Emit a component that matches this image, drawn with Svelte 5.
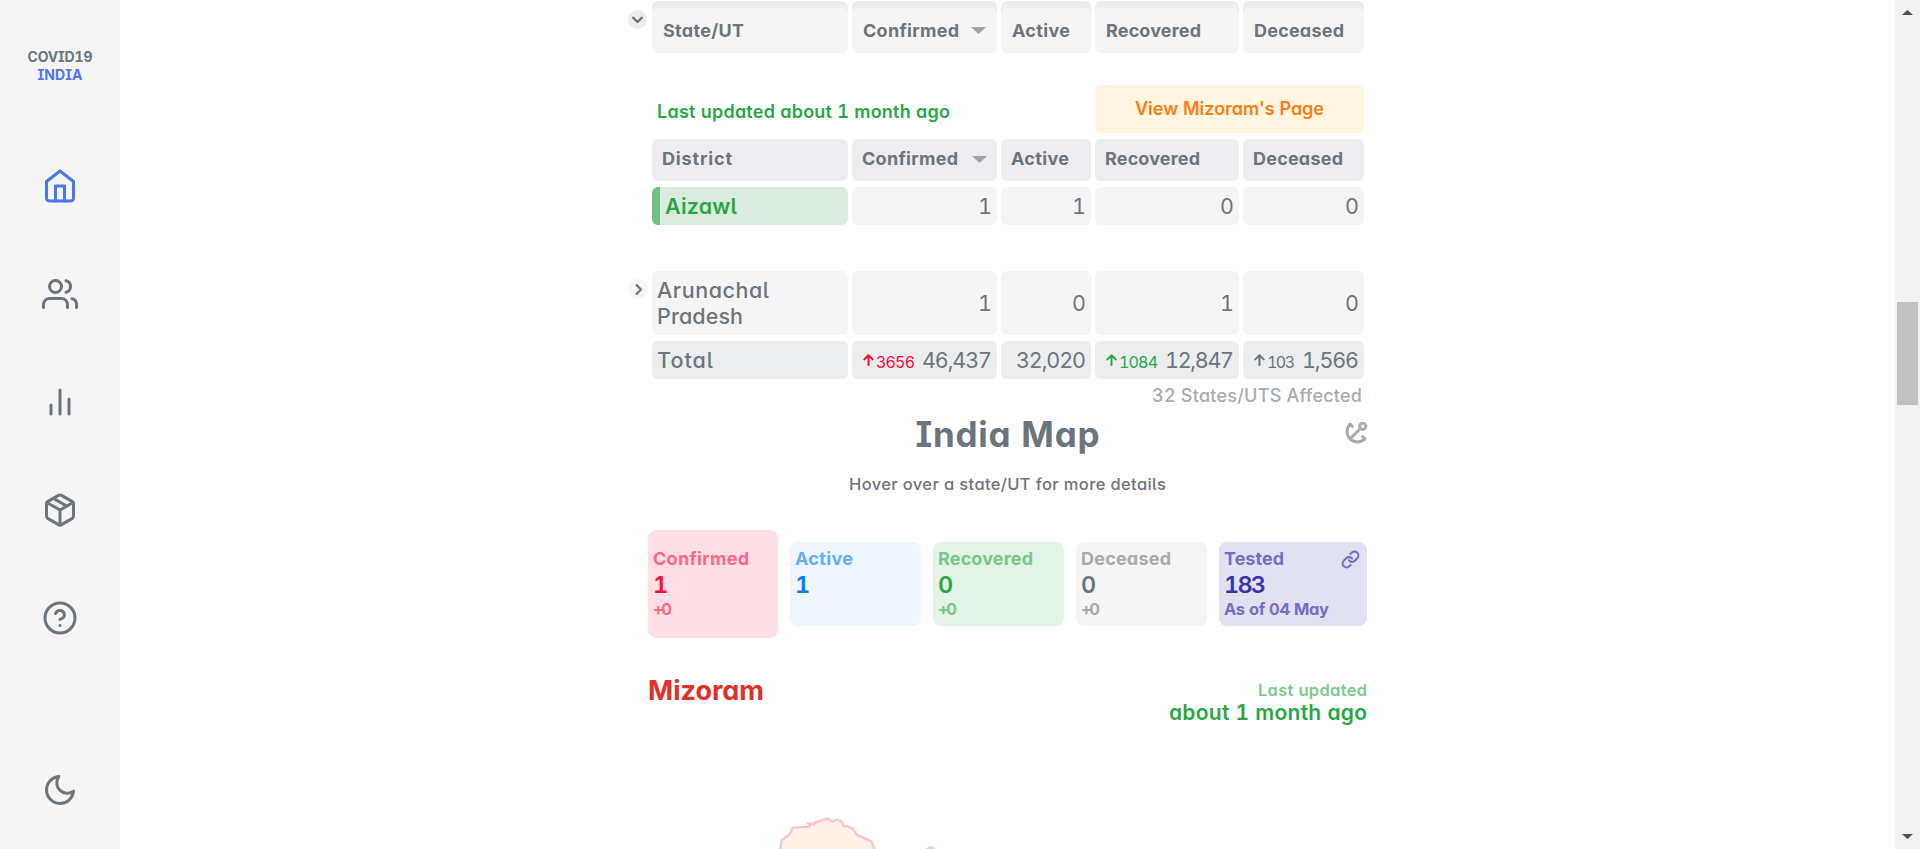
<script>
  const headings = [
    { label: 'Confirmed', width: 96, sorted: true },
    { label: 'Active', width: 58 },
    { label: 'Recovered', width: 95 },
    { label: 'Deceased', width: 90 },
  ];

  const totals = [
    { value: '46,437', width: 70, delta: '3656', deltaWidth: 39, tone: 'red' },
    { value: '32,020', width: 70 },
    { value: '12,847', width: 69, delta: '1084', deltaWidth: 39, tone: 'green' },
    { value: '1,566', width: 57, delta: '103', deltaWidth: 28, tone: 'gray' },
  ];

  const cards = [
    { kind: 'confirmed', label: 'Confirmed', width: 96, value: '1', delta: '+0' },
    { kind: 'active', label: 'Active', width: 58, value: '1', delta: '' },
    { kind: 'recovered', label: 'Recovered', width: 95, value: '0', delta: '+0' },
    { kind: 'deceased', label: 'Deceased', width: 90, value: '0', delta: '+0' },
  ];

  // Tracks a label so that it occupies the given width.
  function fit(node, width) {
    const count = node.textContent.length - 1;
    const spacing = (width - node.getBoundingClientRect().width) / count;
    node.style.letterSpacing = `${spacing}px`;
    node.style.marginRight = `${-spacing}px`;
  }
</script>

{#snippet headRow(first, firstWidth)}
  <div class="cell"><span class="t" use:fit={firstWidth}>{first}</span></div>
  {#each headings as h}
    <div class="cell">
      <span class="t" use:fit={h.width}>{h.label}</span>
      {#if h.sorted}<svg class="caret" width="15" height="7" viewBox="0 0 15 7"><path d="M0 0h15L7.5 7z" /></svg>{/if}
    </div>
  {/each}
{/snippet}

<div class="page">
  <nav>
    <div class="logo">
      <span class="t" use:fit={65}>COVID19</span>
      <span class="t blue" use:fit={45}>INDIA</span>
    </div>
    <svg class="nav-icon blue" viewBox="0 0 24 24"><path d="M3 9l9-7 9 7v11a2 2 0 0 1-2 2H5a2 2 0 0 1-2-2z" /><path d="M9 22V12h6v10" /></svg>
    <svg class="nav-icon" viewBox="0 0 24 24"><path d="M17 21v-2a4 4 0 0 0-4-4H5a4 4 0 0 0-4 4v2" /><circle cx="9" cy="7" r="4" /><path d="M23 21v-2a4 4 0 0 0-3-3.87M16 3.13a4 4 0 0 1 0 7.75" /></svg>
    <svg class="nav-icon" viewBox="0 0 24 24"><path d="M18 20V10M12 20V4M6 20v-6" /></svg>
    <svg class="nav-icon" viewBox="0 0 24 24"><path d="M16.5 9.4L7.5 4.21" /><path d="M21 16V8a2 2 0 0 0-1-1.73l-7-4a2 2 0 0 0-2 0l-7 4A2 2 0 0 0 3 8v8a2 2 0 0 0 1 1.73l7 4a2 2 0 0 0 2 0l7-4A2 2 0 0 0 21 16z" /><path d="M3.27 6.96L12 12.01l8.73-5.05M12 22.08V12" /></svg>
    <svg class="nav-icon" viewBox="0 0 24 24"><circle cx="12" cy="12" r="10" /><path d="M9.09 9a3 3 0 0 1 5.83 1c0 2-3 3-3 3M12 17h.01" /></svg>
    <svg class="nav-icon moon" viewBox="0 0 24 24"><path d="M21 12.79A9 9 0 1 1 11.21 3 7 7 0 0 0 21 12.79z" /></svg>
  </nav>

  <main>
    <section class="table">
      <div class="line">
        <span class="toggle open"><svg viewBox="0 0 24 24"><path d="M5 9l7 7 7-7" /></svg></span>
        <div class="row sticky">{@render headRow('State/UT', 81)}</div>
      </div>
      <div class="row info">
        <span class="updated"><span class="t" use:fit={293}>Last updated about 1 month ago</span></span>
        <div class="button"><span class="t" use:fit={189}>View Mizoram's Page</span></div>
      </div>
      <div class="row district">{@render headRow('District', 70)}</div>
      <div class="row values">
        <div class="cell zone"><span class="t" use:fit={72}>Aizawl</span></div>
        {#each ['1', '1', '0', '0'] as n}<div class="cell num">{n}</div>{/each}
      </div>
      <div class="line state">
        <span class="toggle"><svg viewBox="0 0 24 24"><path d="M9 5l7 7-7 7" /></svg></span>
        <div class="row values">
          <div class="cell name"><span class="t" use:fit={112}>Arunachal</span><span class="t" use:fit={86}>Pradesh</span></div>
          {#each ['1', '0', '1', '0'] as n}<div class="cell num">{n}</div>{/each}
        </div>
      </div>
      <div class="row values total">
        <div class="cell name"><span class="t" use:fit={56}>Total</span></div>
        {#each totals as c}
          <div class="cell num">
            {#if c.delta}
              <span class="delta {c.tone}">
                <svg width="11" height="12" viewBox="0 0 11 12"><path d="M5.5 11V1.5M1.3 5.4L5.5 1.3l4.2 4.1" /></svg>
                <span class="t" use:fit={c.deltaWidth}>{c.delta}</span>
              </span>
            {/if}
            <span class="t" use:fit={c.width}>{c.value}</span>
          </div>
        {/each}
      </div>
      <div class="affected"><span class="t" use:fit={210}>32 States/UTS Affected</span></div>
    </section>

    <section class="map">
      <header>
        <h1><span class="t" use:fit={184}>India Map</span></h1>
        <svg class="anchor" viewBox="0 0 24 24"><g transform="rotate(45 12 12)"><circle cx="12" cy="5" r="3" /><path d="M12 22V8M5 12H2a10 10 0 0 0 20 0h-3" /></g></svg>
      </header>
      <p class="hint"><span class="t" use:fit={317}>Hover over a state/UT for more details</span></p>

      <div class="cards">
        {#each cards as c}
          <div class="card {c.kind}">
            <span class="label"><span class="t" use:fit={c.width}>{c.label}</span></span>
            <span class="value">{c.value}</span>
            <span class="change">{#if c.delta}<span class="t" use:fit={19}>{c.delta}</span>{/if}</span>
          </div>
        {/each}
        <div class="card tested">
          <span class="label">
            <span class="t" use:fit={60}>Tested</span>
            <svg class="link" viewBox="0 0 24 24"><path d="M10 13a5 5 0 0 0 7.54.54l3-3a5 5 0 0 0-7.07-7.07l-1.72 1.71" /><path d="M14 11a5 5 0 0 0-7.54-.54l-3 3a5 5 0 0 0 7.07 7.07l1.71-1.71" /></svg>
          </span>
          <span class="value"><span class="t" use:fit={42}>183</span></span>
          <span class="change"><span class="t" use:fit={105}>As of 04 May</span></span>
        </div>
      </div>

      <div class="region">
        <h2><span class="t" use:fit={116}>Mizoram</span></h2>
        <div class="stamp">
          <span class="t soft" use:fit={109}>Last updated</span>
          <span class="t strong" use:fit={198}>about 1 month ago</span>
        </div>
      </div>

      <svg class="outline" width="200" height="59" viewBox="0 0 600 177">
        <path class="land" d="M60 190L64 152 90 132 98 113 148 110 151 105 142 100 162 104 166 97 203 85 216 95 232 89 247 96 251 109 262 108 278 116 290 134 335 155 352 200" />
        <path class="land east" d="M498 180L508 173H517L524 181" />
      </svg>
    </section>
  </main>

  <aside class="scrollbar">
    <svg width="11" height="5" viewBox="0 0 11 5"><path d="M0 5L5.5 0 11 5z" /></svg>
    <div class="thumb"></div>
    <svg class="down" width="11" height="5" viewBox="0 0 11 5"><path d="M0 0h11L5.5 5z" /></svg>
  </aside>
</div>

<style>
  :global(body) { background: #fff; overflow: hidden; }
  * { box-sizing: border-box; }
  svg { fill: none; stroke: currentColor; stroke-width: 2; stroke-linecap: round; stroke-linejoin: round; display: block; flex: none; }
  .page {
    display: flex; width: 1920px; height: 849px; overflow: hidden; color: #6c757d;
    font-family: Inter, "Open Sans", sans-serif;
    font-feature-settings: "cv05", "cv08", "cv11", "tnum";
  }
  .t { display: inline-block; white-space: nowrap; flex: none; }

  nav { width: 120px; background: #f5f5f5; display: flex; flex-direction: column; align-items: center; gap: 72px; padding-top: 48px; }
  .logo { display: flex; flex-direction: column; align-items: center; font-size: 14px; line-height: 18px; font-weight: 700; margin-bottom: 12px; height: 36px; }
  .blue { color: #4c75f2; }
  .nav-icon { width: 36px; height: 36px; }
  .moon { margin-top: 64px; }

  main { flex: 1; padding-left: 508px; }
  .table { width: 736px; padding: 1px 0 0 24px; }
  .line { display: flex; margin-left: -24px; }
  .toggle { width: 20px; height: 20px; border-radius: 50%; background: #f5f5f5; display: grid; place-items: center; margin-right: 4px; margin-top: 8px; }
  .toggle.open { width: 19px; height: 19px; margin: 9px 5px 0 0; background: #ebedef; }
  .toggle svg { width: 15px; height: 15px; stroke-width: 3.4; }
  .row { display: grid; grid-template-columns: 196px 145px 90px 144px 121px; gap: 4px; width: 712px; flex: none; }
  .cell { border-radius: 6px; background: #f5f5f5; display: flex; align-items: center; }
  .sticky { height: 52px; font-size: 18px; font-weight: 700; }
  .sticky .cell { padding: 6px 11px 0; background: linear-gradient(#f5f5f5, #f5f5f5) 0 11px / 100% 41px no-repeat, radial-gradient(circle at 6px 13px, #f5f5f5 6px, transparent 6.5px) no-repeat 0 0 / 6px 13px, radial-gradient(circle at 0 13px, #f5f5f5 6px, transparent 6.5px) no-repeat 100% 0 / 6px 13px, linear-gradient(#f5f5f5, #f5f5f5) 6px 7px / calc(100% - 12px) 10px no-repeat, #ebedef; }
  .caret { margin-left: 12px; fill: #a0a5aa; stroke: none; }
  .info { margin-top: 32px; height: 48px; font-weight: 600; font-size: 18px; }
  .updated { grid-column: 1 / 4; padding: 16px 0 0 5px; line-height: 22px; color: #28a745; }
  .button { grid-column: 4 / 6; border-radius: 6px; background: #fff5e0; color: #fd7e14; display: grid; place-items: center; padding-bottom: 1px; }
  .district { margin-top: 6px; height: 42px; font-size: 18px; font-weight: 700; }
  .district .cell { background: #ededef; padding: 0 10px 3px; }
  .district .caret { margin: 2px 0 0 14px; }
  .values { margin-top: 6px; height: 38px; font-size: 21.5px; }
  .zone { background: #dcebe0; color: #28a745; border-left: 8px solid #70c283; padding-left: 5px; font-weight: 600; }
  .num { justify-content: flex-end; padding-right: 5px; font-weight: 400; }
  .state { margin-top: 46px; }
  .state .values { height: 64px; margin: 0; }
  .name { padding-left: 5px; flex-direction: column; justify-content: center; align-items: flex-start; line-height: 26px; font-weight: 500; }
  .total .cell { background: #ebedef; }
  .delta { display: flex; align-items: center; font-size: 16px; margin-right: 7px; gap: 2px; padding-top: 3px; }
  .delta svg { margin-bottom: 3px; }
  .red { color: #ff073a; }
  .green { color: #28a745; }
  .affected { display: flex; justify-content: flex-end; padding-right: 2px; width: 712px; font-size: 18px; line-height: 22px; margin-top: 6px; font-weight: 500; color: #a7acb1; }

  .map { width: 719px; margin-left: 20px; }
  header { display: grid; grid-template-columns: 1fr auto 1fr; align-items: center; height: 44px; margin-top: 5px; }
  h1 { grid-column: 2; margin: 0; font-size: 35px; line-height: 42px; font-weight: 700; }
  .anchor { width: 25px; height: 25px; justify-self: end; color: #a7acb1; stroke-width: 2.8; margin: 0 -3px 6px 0; }
  .hint { margin: 18px 0 0; text-align: center; font-size: 16.5px; line-height: 20px; font-weight: 500; }
  .cards { display: flex; gap: 12px; align-items: center; margin-top: 36px; height: 108px; }
  .card { width: 131px; height: 84px; border-radius: 8px; padding: 6px 5px 0 6px; display: flex; flex-direction: column; }
  .label { height: 22px; line-height: 22px; font-size: 18px; font-weight: 700; display: flex; justify-content: space-between; margin-left: -1px; }
  .value { height: 30px; line-height: 30px; font-size: 23.5px; font-weight: 600; margin-left: -1px; }
  .change { height: 18px; line-height: 18px; font-size: 16.5px; font-weight: 700; margin-left: -1px; }
  .confirmed { width: 130px; height: 108px; padding-top: 18px; background: #ffdfe5; color: #ff6785; }
  .confirmed .value { color: #ff073a; }
  .active { background: #eff6ff; color: #64adff; }
  .active .value { color: #007bff; }
  .recovered { background: #e4f3e7; color: #75c889; }
  .recovered .value { color: #28a745; }
  .deceased { background: #f5f5f5; color: #a6abb0; }
  .deceased .value { color: #6c757d; }
  .tested { width: 148px; background: #e2e1f1; color: #736fc6; }
  .tested .value { color: #3a34ac; }
  .link { width: 19px; height: 19px; margin: 2px 2px 0 0; stroke-width: 2.6; }
  .region { display: flex; justify-content: space-between; margin-top: 37px; height: 60px; }
  h2 { margin: 0; font-size: 27px; line-height: 32px; font-weight: 700; color: #e23028; }
  .stamp { display: flex; flex-direction: column; align-items: flex-end; padding-top: 5px; }
  .soft { font-size: 16.5px; line-height: 20px; font-weight: 600; color: #7eca8f; }
  .strong { font-size: 21px; line-height: 26px; font-weight: 600; color: #28a745; }
  .outline { margin: 55px 0 0 112px; }
  .land { fill: #fff2e9; stroke: #ffc0cb; stroke-width: 7; }
  .east { fill: #ffc0cb; }

  .scrollbar { width: 25px; background: #f1f1f1; display: flex; flex-direction: column; align-items: center; padding: 10px 0; }
  .scrollbar svg { fill: #505050; stroke: none; }
  .thumb { width: 21px; height: 103px; background: #c1c1c1; margin-top: 287px; }
  .down { margin-top: auto; }
</style>
